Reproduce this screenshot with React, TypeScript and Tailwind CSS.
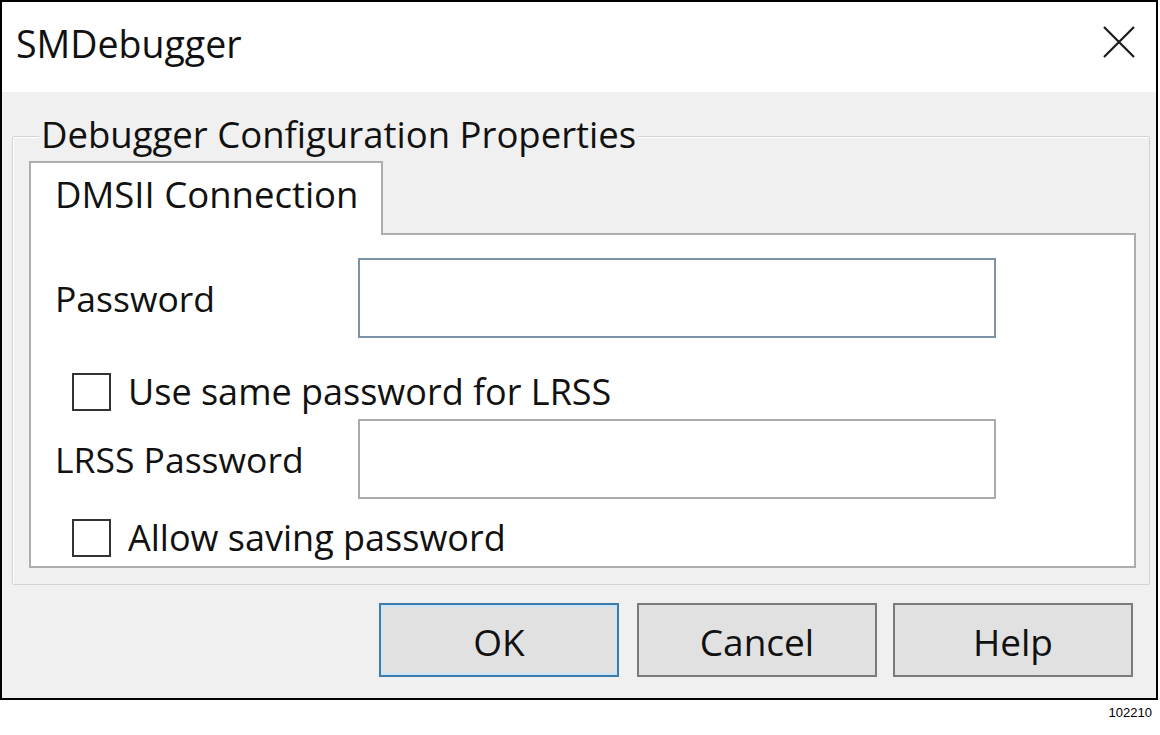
import React from "react";

const font = { fontFamily: '"Open Sans", "Noto Sans", sans-serif' };

function Checkbox({ label }: { label: string }) {
  return (
    <div className="flex items-center h-[38px] ml-[17px]">
      <div className="w-[39px] h-[38px] border-2 border-[#333333] bg-white shrink-0" />
      <span className="ml-[17px] text-[36px] leading-[42px] text-[#111]">{label}</span>
    </div>
  );
}

function Field({ label, focused }: { label: string; focused?: boolean }) {
  return (
    <div className="flex items-center h-[80px]">
      <span className="w-[303px] shrink-0 text-[35.5px] leading-[42px] text-[#111]">{label}</span>
      <div
        className={
          "w-[638px] h-[80px] bg-white border-2 " +
          (focused ? "border-[#7d93a8]" : "border-[#ababab]")
        }
      />
    </div>
  );
}

function Button({ label, primary, className = "" }: { label: string; primary?: boolean; className?: string }) {
  return (
    <button
      className={
        "w-[240px] h-[74px] bg-[#e1e1e1] border-2 flex items-center justify-center pt-[4px] text-[37px] leading-[42px] text-[#111] " +
        (primary ? "border-[#3d7bad] shadow-[inset_0_0_0_2px_#cde6f7] " : "border-[#7a7a7a] ") +
        className
      }
    >
      {label}
    </button>
  );
}

export default function App() {
  return (
    <div className="w-[1160px] h-[735px] bg-white" style={font}>
      <div className="w-[1158px] h-[700px] border-2 border-black flex flex-col">
        {/* title bar */}
        <div className="h-[90px] bg-white flex items-start justify-between shrink-0">
          <span className="pl-[14px] pt-[20px] text-[37.5px] leading-[44px] text-[#111]">SMDebugger</span>
          <svg className="mt-[23px] mr-[20px]" width="34" height="34" viewBox="0 0 34 34">
            <path d="M2 2 L32 32 M32 2 L2 32" stroke="#1a1a1a" strokeWidth="2.2" fill="none" />
          </svg>
        </div>

        {/* body */}
        <div className="flex-1 bg-[#f0f0f0] flex flex-col pt-[44px] pl-[10px] pr-[6px]">
          <div className="relative h-[449px] border border-[#d3d3d3] rounded-[2px] shadow-[inset_1px_1px_0_#ffffff] pt-[24px] pl-[16px] pr-[13px] pb-[16px] flex flex-col">
            <span className="absolute left-[26px] top-[-24px] px-[2px] bg-[#f0f0f0] text-[36.5px] leading-[42px] text-[#111]">
              Debugger Configuration Properties
            </span>

            <div className="relative z-10 w-[354px] h-[74px] -mb-[2px] bg-white border-2 border-b-0 border-[#adadad] flex items-center pl-[24px] pb-[10px]">
              <span className="text-[36.5px] leading-[42px] text-[#111]">DMSII Connection</span>
            </div>

            <div className="flex-1 bg-white border-2 border-[#adadad] pl-[24px] pt-[23px] flex flex-col">
              <Field label="Password" focused />
              <div className="mt-[35px]">
                <Checkbox label="Use same password for LRSS" />
              </div>
              <div className="mt-[8px]">
                <Field label="LRSS Password" />
              </div>
              <div className="mt-[20px]">
                <Checkbox label="Allow saving password" />
              </div>
            </div>
          </div>

          <div className="flex justify-end pr-[17px] mt-[18px]">
            <Button label="OK" primary />
            <Button label="Cancel" className="ml-[18px]" />
            <Button label="Help" className="ml-[16px]" />
          </div>
        </div>
      </div>
      <div className="flex justify-end pr-[8px] mt-[6px]">
        <span className="text-[13px] leading-none text-black" style={{ fontFamily: '"Liberation Sans", Arial, sans-serif' }}>
          102210
        </span>
      </div>
    </div>
  );
}
